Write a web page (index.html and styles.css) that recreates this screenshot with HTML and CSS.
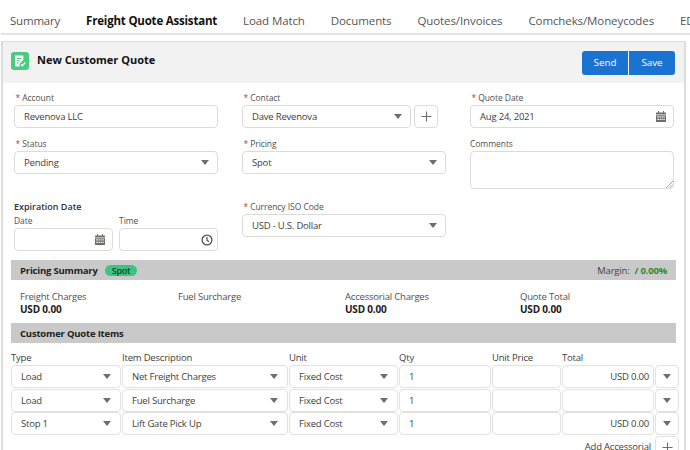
FILE: index.html
```html
<!DOCTYPE html>
<html lang="en">
<head>
<meta charset="utf-8">
<title>New Customer Quote</title>
<link rel="stylesheet" href="styles.css">
</head>
<body>
<svg class="defs" width="0" height="0" aria-hidden="true">
  <symbol id="cal" viewBox="0 0 10 11">
    <path fill="#706e6b" d="M2 0h1v1.500h4V0h1v1.500h1.500a.5.5 0 0 1 .5.500V3.500H0V2a.5.5 0 0 1 .5-.5H2zM0 4.300h10V10.500a.5.5 0 0 1-.5.500H.5a.5.5 0 0 1-.5-.5z"/>
    <path fill="#fff" d="M1.300 5.300h1.500v1.200H1.300zM3.600 5.300h1.200v1.200H3.600zM5.600 5.300h1.200v1.200H5.600zM7.500 5.300h1.200v1.200H7.500zM1.300 7.800h1.500v1.200H1.300zM3.600 7.800h1.200v1.200H3.600zM5.600 7.800h1.200v1.200H5.600zM7.500 7.800h1.200v1.200H7.500z"/>
  </symbol>
</svg>
<nav class="tabs">
  <span class="tab">Summary</span>
  <span class="tab active">Freight Quote Assistant</span>
  <span class="tab">Load Match</span>
  <span class="tab">Documents</span>
  <span class="tab">Quotes/Invoices</span>
  <span class="tab">Comcheks/Moneycodes</span>
  <span class="tab">EDI</span>
</nav>
<main class="card">
  <header class="card-head">
    <div class="title">
      <span class="app-icon">
        <svg width="18" height="18" viewBox="0 0 18 18"><path fill="#fff" d="M4 3.500h7.500a.8.8 0 0 1 .8.800V8l-3.800 4v2.500H4.800a.8.8 0 0 1-.8-.8z"/><path stroke="#4bca81" stroke-width="1.100" d="M5.800 6.500h4.500M5.800 8.800h3M5.800 11h2"/><path fill="none" stroke="#fff" stroke-width="1.300" d="M10 12.500l1.300 1.300 3-3.300"/></svg>
      </span>
      <h1>New Customer Quote</h1>
    </div>
    <div class="actions"><button class="btn">Send</button><button class="btn">Save</button></div>
  </header>

  <section class="form">
    <div class="field">
      <label><i>*</i>Account</label>
      <div class="box">Revenova LLC</div>
    </div>
    <div class="field">
      <label><i>*</i>Contact</label>
      <div class="with-add">
        <div class="box select">Dave Revenova<span class="caret"></span></div>
        <span class="add"><svg width="11" height="11" viewBox="0 0 12 12"><path stroke="#706e6b" stroke-width="1.200" d="M6 .5v11M.5 6h11"/></svg></span>
      </div>
    </div>
    <div class="field">
      <label><i>*</i>Quote Date</label>
      <div class="box select">Aug 24, 2021<svg class="ico"><use href="#cal"/></svg></div>
    </div>

    <div class="field">
      <label><i>*</i>Status</label>
      <div class="box select">Pending<span class="caret"></span></div>
    </div>
    <div class="field">
      <label><i>*</i>Pricing</label>
      <div class="box select">Spot<span class="caret"></span></div>
    </div>
    <div class="field comments">
      <label class="plain">Comments</label>
      <div class="box area"><svg class="grip" width="8" height="8" viewBox="0 0 8 8"><path stroke="#8a8886" stroke-width=".8" d="M1 8l7-7M4.500 8L8 4.500"/></svg></div>
    </div>

    <div class="expire">
      <strong>Expiration Date</strong>
      <div class="datetime">
        <div class="field">
          <label class="plain">Date</label>
          <div class="box select"><svg class="ico"><use href="#cal"/></svg></div>
        </div>
        <div class="field">
          <label class="plain">Time</label>
          <div class="box select"><svg class="ico clock" viewBox="0 0 12 12"><circle cx="6" cy="6" r="4.900" fill="none" stroke="#514f4d" stroke-width="1.300"/><path fill="none" stroke="#514f4d" stroke-width="1.200" d="M6 3v3.200l2 1.600"/></svg></div>
        </div>
      </div>
    </div>
    <div class="field currency">
      <label><i>*</i>Currency ISO Code</label>
      <div class="box select">USD - U.S. Dollar<span class="caret"></span></div>
    </div>
  </section>

  <section class="bar">
    <div class="bar-left"><b>Pricing Summary</b><span class="pill">Spot</span></div>
    <div class="margin">Margin:<b>/ 0.00%</b></div>
  </section>
  <section class="totals">
    <div>Freight Charges<b>USD 0.00</b></div>
    <div>Fuel Surcharge</div>
    <div>Accessorial Charges<b>USD 0.00</b></div>
    <div>Quote Total<b>USD 0.00</b></div>
  </section>
  <section class="bar"><b>Customer Quote Items</b></section>

  <section class="items">
    <span class="h">Type</span><span class="h">Item Description</span><span class="h">Unit</span><span class="h">Qty</span><span class="h">Unit Price</span><span class="h">Total</span><span class="h"></span>

    <div class="cell select">Load<span class="caret"></span></div>
    <div class="cell select">Net Freight Charges<span class="caret"></span></div>
    <div class="cell select">Fixed Cost<span class="caret"></span></div>
    <div class="cell">1</div><div class="cell"></div>
    <div class="cell right">USD 0.00</div>
    <div class="cell select mini"><span class="caret"></span></div>

    <div class="cell select">Load<span class="caret"></span></div>
    <div class="cell select">Fuel Surcharge<span class="caret"></span></div>
    <div class="cell select">Fixed Cost<span class="caret"></span></div>
    <div class="cell">1</div><div class="cell"></div>
    <div class="cell right"></div>
    <div class="cell select mini"><span class="caret"></span></div>

    <div class="cell select">Stop 1<span class="caret"></span></div>
    <div class="cell select">Lift Gate Pick Up<span class="caret"></span></div>
    <div class="cell select">Fixed Cost<span class="caret"></span></div>
    <div class="cell">1</div><div class="cell"></div>
    <div class="cell right">USD 0.00</div>
    <div class="cell select mini"><span class="caret"></span></div>

    <div class="add-row">Add Accessorial</div>
    <div class="cell mini plus"><svg width="11" height="11" viewBox="0 0 12 12"><path stroke="#706e6b" stroke-width="1.200" d="M6 .5v11M.5 6h11"/></svg></div>
  </section>
</main>
</body>
</html>
```
FILE: styles.css
```css
* { box-sizing: border-box; }
html, body { margin: 0; height: 450px; overflow: hidden; background: #fff; }
body { width: 690px; font-family: "Open Sans", "Noto Sans", sans-serif; font-size: 9.500px; letter-spacing: -.2px; color: #3e3e3c; }
.defs { position: absolute; }

.tabs { display: flex; height: 35px; margin-left: 1px; border-bottom: 2px solid #e5e5e5; font-size: 11.500px; letter-spacing: -.1px; color: #555; white-space: nowrap; overflow: hidden; }
.tab { flex: none; padding: 13px 0 0; line-height: 16px; margin-right: 26px; }
.tab:first-child { margin-left: 9px; margin-right: 17px; letter-spacing: -.2px; }
.tab.active { padding: 13px 9px 0; margin-right: 17px; color: #111; font-weight: 700; letter-spacing: -.2px; border-bottom: 2px solid #4a90e2; height: 35px; }

.card { margin: 6px 4px 0 1px; border: 1px solid #ddd; border-width: 1px 2px 0; height: 420px; }
.card-head { display: flex; justify-content: space-between; align-items: center; height: 41px; padding: 0 9px 0 8px; background: #f3f2f2; }
.title { display: flex; align-items: center; gap: 8px; padding-bottom: 3px; }
.title h1 { margin: -3px 0 0; font-size: 11px; font-weight: 700; letter-spacing: 0; color: #111; }
.app-icon { display: flex; width: 18px; height: 18px; border-radius: 3px; background: #4bca81; }
.actions { display: flex; gap: 1px; }
.btn { width: 46px; height: 24px; padding: 0; border: 0; background: #1b73d1; color: #fff; font: 9.800px "Open Sans", sans-serif; border-radius: 3px 0 0 3px; }
.btn + .btn { border-radius: 0 3px 3px 0; }

.form { display: grid; grid-template-columns: 204px 204px 204px; column-gap: 24px; grid-template-rows: 46px 46px 75px; padding: 9px 0 0 11px; height: 177px; }
label { display: block; height: 13px; padding-left: 1.500px; line-height: 11px; font-size: 8.500px; letter-spacing: -.05px; color: #514f4d; white-space: nowrap; }
label.plain { padding-left: 0; }
label i { color: #c23934; font-style: normal; margin-right: 2px; }
.box { display: flex; align-items: center; height: 23px; padding: 0 9px; border: 1px solid #dddbda; border-radius: 4px; background: #fff; color: #3e3e3c; position: relative; }
.select { justify-content: space-between; }
.caret { flex: none; width: 0; height: 0; border: 4px solid transparent; border-top: 5px solid #706e6b; border-bottom: 0; }
.box .caret { margin-right: -1px; }
.with-add { display: flex; gap: 3px; padding-right: 8px; }
.with-add .select { flex: 1; }
.add { display: flex; align-items: center; justify-content: center; width: 24px; flex: none; height: 23px; border: 1px solid #dddbda; border-radius: 4px; }
.ico { width: 10px; height: 11px; margin: 0 -2px 0 auto; flex: none; }
.ico.clock { width: 12px; height: 12px; margin-right: -5px; }
.comments .area { height: 38px; }
.grip { position: absolute; right: 0; bottom: 0; }
.expire { padding-top: 16px; }
.expire strong { display: block; font-size: 9px; font-weight: 600; letter-spacing: 0; line-height: 14px; color: #333; }
.datetime { display: flex; gap: 6px; margin-top: 1px; }
.datetime .field { width: 99px; }
.currency { padding-top: 17px; }

.bar { display: flex; align-items: center; justify-content: space-between; height: 20px; margin: 0 8px; padding: 0 9px; background: #c9c9c9; color: #222; }
.bar b { font-weight: 700; }
.bar-left { display: flex; align-items: center; gap: 7px; }
.pill { padding: 0 7px; height: 11px; line-height: 11px; border-radius: 6px; background: #3fc380; font-size: 9px; font-weight: 600; color: #143; }
.margin { display: flex; gap: 5px; color: #444; }
.margin b { color: #2e8b1f; }
.totals { display: grid; grid-template-columns: 158px 167px 175px auto; height: 43px; padding: 10px 0 0 17px; line-height: 13px; color: #514f4d; }
.totals b { display: block; color: #1c1c1c; font-size: 10px; font-weight: 700; }

.items { display: grid; grid-template-columns: 110px 166px 109px 92px 69px 92px 24px; column-gap: 1px; margin: 13px 0 0 8px; width: 667px; }
.h { height: 12px; line-height: 9px; margin-top: -3px; white-space: nowrap; padding-bottom: 12px; }
.cell { display: flex; align-items: center; height: 23px; padding: 0 9px; border: 1px solid #e2e1e0; border-radius: 4px; background: #fff; margin-bottom: .6px; }
.cell.right { justify-content: flex-end; padding-right: 4px; }
.cell.mini { justify-content: center; padding: 0; }
.add-row { grid-column: 1 / 7; text-align: right; padding: 4px 3px 0 0; line-height: 14px; }
```
